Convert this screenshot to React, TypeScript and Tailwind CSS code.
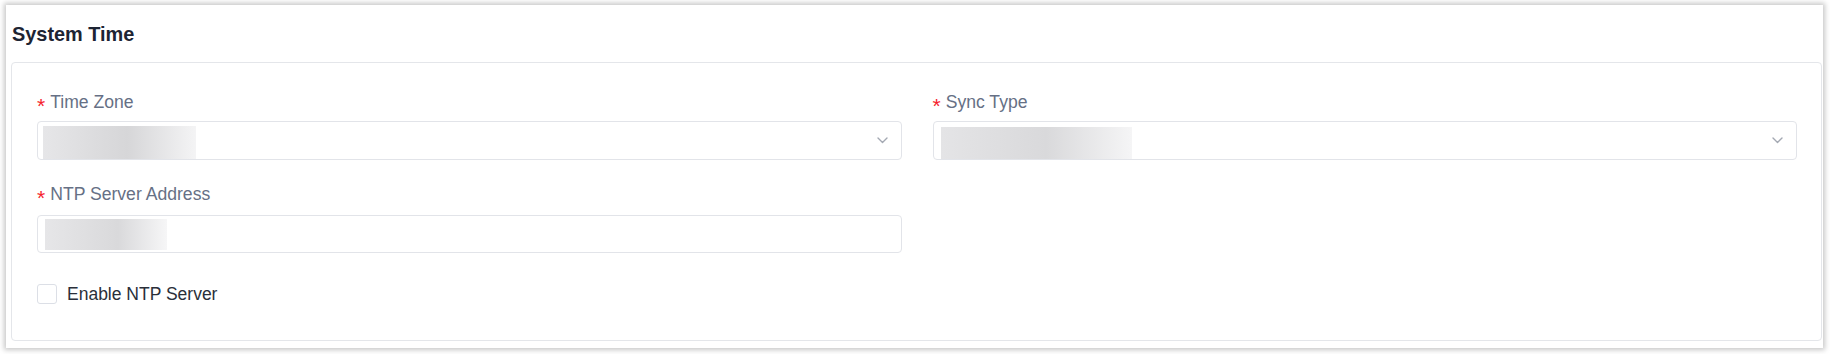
import React from "react";

function Req({ children }: { children: React.ReactNode }) {
  return (
    <div className="flex items-center h-[24px] text-[17.6px] leading-[24px] text-[#667085]">
      <span className="text-[#f5222d] text-[21px] leading-[24px] mr-[5px] translate-y-[4px] inline-block">*</span>
      <span>{children}</span>
    </div>
  );
}

function Chevron() {
  return (
    <svg width="11" height="7" viewBox="0 0 11 7" className="shrink-0">
      <polyline points="1,1 5.5,5.5 10,1" fill="none" stroke="#a3a8b2" strokeWidth="1.4" strokeLinecap="round" strokeLinejoin="round" />
    </svg>
  );
}

export default function App() {
  return (
    <div
      className="w-full h-[354px] bg-white pt-[5px] pl-[6px] pr-[7px] pb-[6px]"
      style={{ fontFamily: '"Liberation Sans", Arial, sans-serif' }}
    >
      <div className="h-full bg-white shadow-[0_0_5px_2px_rgba(0,0,0,0.22)] flex flex-col">
        <div className="h-[57px] flex items-center pl-[6px] text-[19.9px] leading-[20px] font-bold text-[#1d2433]">
          System Time
        </div>
        <div className="flex-1 ml-[5px] mr-[1px] mb-[7px] border border-[#e4e6ea] rounded-[4px] pl-[25px] pr-[24px] pt-[27px]">
          <div className="grid grid-cols-2 gap-x-[31px]">
            <div>
              <Req>Time Zone</Req>
              <div className="mt-[7px] h-[39px] border border-[#e2e4e9] rounded-[4px] flex items-end justify-between pl-[5px] pr-[13px]">
                <div className="w-[153px] h-[33px] bg-[linear-gradient(90deg,#e6e6e8,#d6d6d8_55%,#f4f4f5)]" />
                <div className="self-center"><Chevron /></div>
              </div>
            </div>
            <div>
              <Req>Sync Type</Req>
              <div className="mt-[7px] h-[39px] border border-[#e2e4e9] rounded-[4px] flex items-end justify-between pl-[7px] pr-[13px]">
                <div className="w-[191px] h-[32px] bg-[linear-gradient(90deg,#e4e4e6,#d9d9db_55%,#f5f5f6)]" />
                <div className="self-center"><Chevron /></div>
              </div>
            </div>
          </div>
          <div className="grid grid-cols-2 gap-x-[31px] mt-[22px]">
            <div>
              <Req>NTP Server Address</Req>
              <div className="mt-[9px] h-[38px] border border-[#e2e4e9] rounded-[4px] flex items-center pl-[7px]">
                <div className="w-[122px] h-[31px] bg-[linear-gradient(90deg,#e6e6e8,#d9d9db_60%,#f6f6f7)]" />
              </div>
            </div>
          </div>
          <div className="mt-[29px] flex items-center">
            <div className="w-[20px] h-[20px] border border-[#dcdfe6] rounded-[3px] bg-white" />
            <span className="ml-[10px] text-[17.5px] leading-[24px] text-[#2a2f3a]">Enable NTP Server</span>
          </div>
        </div>
      </div>
    </div>
  );
}
